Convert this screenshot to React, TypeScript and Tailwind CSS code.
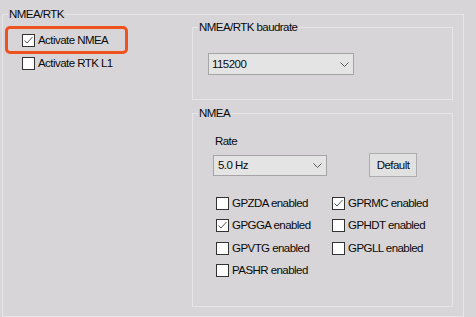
import React from 'react';

function Chevron() {
  return (
    <svg width="9" height="5" viewBox="0 0 9 5" className="shrink-0">
      <path d="M0.5 0.5 L4.5 4.5 L8.5 0.5" fill="none" stroke="#5a5a5a" strokeWidth="1" />
    </svg>
  );
}

function Check({ label, checked }: { label: string; checked?: boolean }) {
  return (
    <label className="flex items-center gap-[3px] h-full">
      <span className="w-[13px] h-[13px] border border-[#333333] bg-white flex items-center justify-center shrink-0">
        {checked && (
          <svg width="11" height="11" viewBox="0 0 11 11">
            <path d="M1.5 5.5 L4 8 L9.5 2" fill="none" stroke="#555555" strokeWidth="1" />
          </svg>
        )}
      </span>
      <span className="whitespace-nowrap">{label}</span>
    </label>
  );
}

function Select({ value, className }: { value: string; className: string }) {
  return (
    <div className={`flex items-center justify-between border border-[#a5a5a5] bg-[#e4e4e4] pl-[3px] pr-[4px] ${className}`}>
      <span>{value}</span>
      <Chevron />
    </div>
  );
}

export default function App() {
  const messages = [
    { label: 'GPZDA enabled' },
    { label: 'GPRMC enabled', checked: true },
    { label: 'GPGGA enabled', checked: true },
    { label: 'GPHDT enabled' },
    { label: 'GPVTG enabled' },
    { label: 'GPGLL enabled' },
    { label: 'PASHR enabled' },
  ];

  return (
    <div className="relative w-[476px] h-[317px] overflow-hidden bg-[#d7d5d8] pl-[2px] pt-[8px] font-['Liberation_Sans',Arial,sans-serif] text-[11.5px] leading-[13px] tracking-[-0.55px] text-[#0a0a0a]">
      <fieldset className="w-[462px] h-[309px] border border-[#e7e5e8]">
        <legend className="ml-[5px] px-[1px]">NMEA/RTK</legend>
        <div className="flex">
          {/* Activation */}
          <div className="w-[189px] pl-[19px] pt-[8px] flex flex-col">
            <div className="h-[23px]">
              <Check label="Activate NMEA" checked />
            </div>
            <div className="h-[23px]">
              <Check label="Activate RTK L1" />
            </div>
          </div>

          <div className="flex flex-col">
            {/* Baudrate */}
            <fieldset className="w-[261px] h-[79px] border border-[#e7e5e8]">
              <legend className="ml-[5px] px-[1px]">NMEA/RTK baudrate</legend>
              <Select value="115200" className="mt-[19px] ml-[15px] w-[146px] h-[22px]" />
            </fieldset>

            {/* NMEA messages */}
            <fieldset className="mt-[7px] w-[261px] h-[200px] border border-[#e7e5e8]">
              <legend className="ml-[5px] px-[1px]">NMEA</legend>
              <div className="mt-[15px] ml-[22px]">Rate</div>
              <div className="mt-[5px] h-[24px] flex items-center">
                <Select value="5.0 Hz" className="ml-[20px] w-[114px] h-[21px] pl-[4px]" />
                <button className="ml-[42px] w-[48px] h-[24px] border border-[#adadad] bg-[#e1e1e1] flex items-center justify-center">
                  Default
                </button>
              </div>
              <div className="mt-[15px] ml-[23px] grid grid-cols-[116px_116px] auto-rows-[22.5px]">
                {messages.map((m) => (
                  <Check key={m.label} label={m.label} checked={m.checked} />
                ))}
              </div>
            </fieldset>
          </div>
        </div>
      </fieldset>

      {/* highlight annotation */}
      <div className="absolute left-[5px] top-[26px] w-[123px] h-[28px] border-[3px] border-[#f0521e] rounded-[5px] pointer-events-none" />
    </div>
  );
}
